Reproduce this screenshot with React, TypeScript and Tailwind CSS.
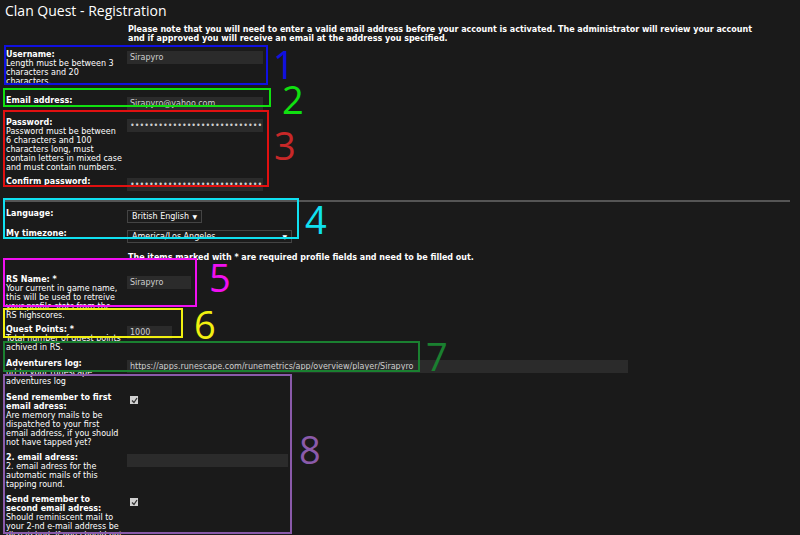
import React from "react";

const F = { fontFamily: '"DejaVu Sans", Verdana, sans-serif' };

function Inp({ v, w, pw }: { v?: string; w: string; pw?: boolean }) {
  return (
    <div className={`${w} h-[13px] bg-[#2b2b2b] text-[#cfcfcf] text-[8px] leading-[13px] px-[3px] overflow-hidden whitespace-nowrap`}>
      {pw ? "••••••••••••••••••••••••••••••••••••••" : v}
    </div>
  );
}

function Row({ label, desc, children, cls = "" }: { label: string; desc?: string; children?: React.ReactNode; cls?: string }) {
  return (
    <div className={`flex ${cls}`}>
      <div className="w-[123px] shrink-0 pl-[2px] pr-[4px] text-[8px] leading-[9px] text-white">
        <div className="font-bold">{label}</div>
        {desc && <div>{desc}</div>}
      </div>
      <div className="pt-[1px]">{children}</div>
    </div>
  );
}

function Box({ c, x, y, w, h }: { c: string; x: number; y: number; w: number; h: number }) {
  return <div className="absolute border-2 pointer-events-none" style={{ borderColor: c, left: x, top: y, width: w, height: h }} />;
}
function Num({ c, x, y, t }: { c: string; x: number; y: number; t: string }) {
  return <div className="absolute text-[38px] leading-[38px]" style={{ color: c, left: x, top: y, fontFamily: '"Open Sans", sans-serif' }}>{t}</div>;
}
const Chk = () => (
  <div className="ml-[3px] mt-[2px] w-[8px] h-[8px] bg-[#d0d0d0] flex items-center justify-center">
    <svg width="7" height="7" viewBox="0 0 7 7"><path d="M1 3.5 L3 5.5 L6 1" stroke="#333" strokeWidth="1.3" fill="none" /></svg>
  </div>
);
const Sel = ({ v, w }: { v: string; w: string }) => (
  <div className={`${w} h-[13px] border border-[#444] bg-[#1c1c1c] text-white text-[8px] leading-[11px] px-[4px] flex justify-between whitespace-nowrap`}>
    <span>{v}</span><span className="text-[6px]">▼</span>
  </div>
);

export default function App() {
  return (
    <div className="relative w-[800px] h-[535px] bg-[#1a1a1a] overflow-hidden text-white" style={F}>
      <div className="pl-[5px] pt-[1px] text-[14px] leading-[20px]" style={{ fontFamily: '"Open Sans", sans-serif' }}>Clan Quest - Registration</div>
      <div className="pl-[128px] pr-[30px] pt-[4px] text-[8px] leading-[9px] font-bold">
        Please note that you will need to enter a valid email address before your account is activated. The administrator will review your account and if approved you will receive an email at the address you specified.
      </div>
      <div className="pl-[4px] pt-[7px]">
        <Row label="Username:" desc="Length must be between 3 characters and 20 characters." cls="h-[44px]"><Inp v="Sirapyro" w="w-[136px]" /></Row>
        <Row label="Email address:" cls="h-[21px] pt-[2px]"><Inp v="Sirapyro@yahoo.com" w="w-[136px]" /></Row>
        <Row label="Password:" desc="Password must be between 6 characters and 100 characters long, must contain letters in mixed case and must contain numbers." cls="h-[62px] pt-[3px]"><Inp pw w="w-[136px]" /></Row>
        <Row label="Confirm password:" cls="h-[18px]"><Inp pw w="w-[136px]" /></Row>
      </div>
      <div className="mx-[5px] mt-[5px] h-[2px] bg-[#555] w-[785px]" />
      <div className="pl-[4px] pt-[7px]">
        <Row label="Language:" cls="h-[20px]"><Sel v="British English" w="w-[75px]" /></Row>
        <Row label="My timezone:" cls="h-[24px]"><Sel v="America/Los Angeles" w="w-[165px]" /></Row>
      </div>
      <div className="pl-[128px] text-[8px] leading-[9px] font-bold">The items marked with * are required profile fields and need to be filled out.</div>
      <div className="pl-[4px] pt-[13px]">
        <Row label="RS Name: *" desc="Your current in game name, this will be used to retreive your profile stats from the RS highscores." cls="h-[50px]"><Inp v="Sirapyro" w="w-[64px]" /></Row>
        <Row label="Quest Points: *" desc="Total number of quest points achived in RS." cls="h-[34px]"><Inp v="1000" w="w-[45px]" /></Row>
        <Row label="Adventurers log:" desc="url to your runescape adventures log" cls="h-[34px]"><Inp v="https://apps.runescape.com/runemetrics/app/overview/player/Sirapyro" w="w-[501px]" /></Row>
        <Row label="Send remember to first email adress:" desc="Are memory mails to be dispatched to your first email address, if you should not have tapped yet?" cls="h-[60px]"><Chk /></Row>
        <Row label="2. email adress:" desc="2. email adress for the automatic mails of this tapping round." cls="h-[42px]"><Inp w="w-[161px]" /></Row>
        <Row label="Send remember to second email adress:" desc="Should reminiscent mail to your 2-nd e-mail address be dispatched, if you should not have tapped yet?"><Chk /></Row>
      </div>

      <Box c="#1010e0" x={4} y={45} w={264} h={40} />
      <Num c="#1010e0" x={273} y={45} t="1" />
      <Box c="#10e010" x={3} y={88} w={268} h={19} />
      <Num c="#10e010" x={282} y={80} t="2" />
      <Box c="#e01010" x={3} y={110} w={266} h={77} />
      <Num c="#c82828" x={274} y={126} t="3" />
      <Box c="#10e0f0" x={3} y={198} w={296} h={41} />
      <Num c="#10e0f0" x={305} y={200} t="4" />
      <Box c="#f010f0" x={3} y={258} w={194} h={49} />
      <Num c="#f010f0" x={209} y={258} t="5" />
      <Box c="#f0f010" x={3} y={308} w={180} h={30} />
      <Num c="#f0f010" x={194} y={305} t="6" />
      <Box c="#1a8030" x={3} y={341} w={417} h={31} />
      <Num c="#1a8030" x={426} y={337} t="7" />
      <Box c="#8a5aaa" x={3} y={374} w={289} h={160} />
      <Num c="#8a5aaa" x={299} y={430} t="8" />
    </div>
  );
}
